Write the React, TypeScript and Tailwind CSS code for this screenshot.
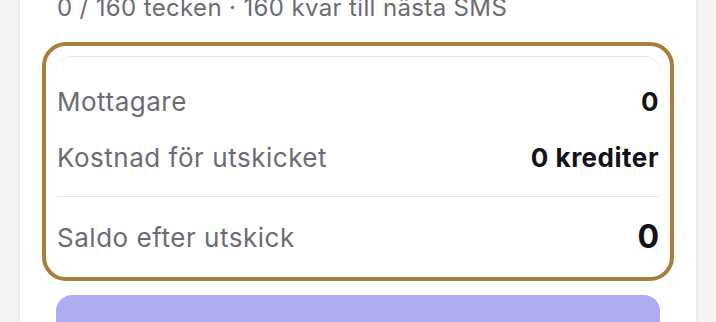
import React from 'react';

const rows = [
  { label: 'Mottagare', value: '0' },
  { label: 'Kostnad för utskicket', value: '0 krediter' },
];

export default function App() {
  return (
    <div
      className="min-h-screen bg-[#f4f4f5] px-[18px] overflow-hidden"
      style={{ fontFamily: 'Inter, "Noto Sans", sans-serif' }}
    >
      <div className="bg-white border-x-2 border-[#ececee] px-[22px] pb-10 -mt-[6px]">
        <p className="text-[24px] leading-[28px] tracking-[0.015em] text-[#6b6b76] pl-[15px] whitespace-nowrap">
          0 / 160 tecken · 160 kvar till nästa SMS
        </p>

        {/* Summary */}
        <div className="mt-[20px] rounded-[24px] border-4 border-[#a97e3c] p-[10px]">
          <div className="rounded-[16px] border-t border-[#e4e4e7] pt-[28px] pb-[14px] px-px">
            <div className="flex flex-col gap-[24px]">
              {rows.map((r) => (
                <div key={r.label} className="flex items-center justify-between h-[32px]">
                  <span className="text-[26px] tracking-[0.02em] text-[#6b6b76]">{r.label}</span>
                  <span className="text-[26px] tracking-[0.02em] font-bold text-[#111318]">{r.value}</span>
                </div>
              ))}
            </div>
            <div className="mt-[23px] h-px bg-[#e4e4e7]" />
            <div className="mt-[24px] flex items-center justify-between h-[32px]">
              <span className="text-[26px] tracking-[0.02em] text-[#6b6b76]">Saldo efter utskick</span>
              <span className="text-[32px] font-bold text-[#111318]">0</span>
            </div>
          </div>
        </div>

        <button className="mt-[14px] mx-[14px] w-[calc(100%-28px)] h-[56px] rounded-[16px] bg-[#b0abf0]" />
      </div>
    </div>
  );
}
